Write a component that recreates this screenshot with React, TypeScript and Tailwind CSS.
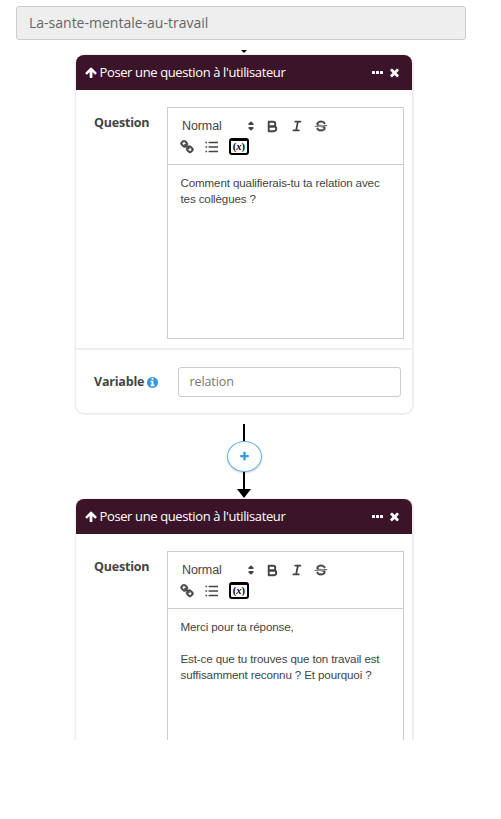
import type { ReactNode } from 'react';

const PATHS = {
  up: 'M1611 971q0 51-37 90l-75 75q-38 38-91 38-54 0-90-38l-294-293v704q0 52-37.5 84.5t-90.5 32.5h-128q-53 0-90.5-32.5t-37.5-84.5v-704l-294 293q-36 38-90 38t-90-38l-75-75q-38-38-38-90 0-53 38-91l651-651q35-37 90-37 54 0 91 37l651 651q37 39 37 91z',
  times:
    'M1490 1322q0 40-28 68l-136 136q-28 28-68 28t-68-28l-294-294-294 294q-28 28-68 28t-68-28l-136-136q-28-28-28-68t28-68l294-294-294-294q-28-28-28-68t28-68l136-136q28-28 68-28t68 28l294 294 294-294q28-28 68-28t68 28l136 136q28 28 28 68t-28 68l-294 294 294 294q28 28 28 68z',
  info: 'M1152 1376v-160q0-14-9-23t-23-9h-96v-512q0-14-9-23t-23-9h-320q-14 0-23 9t-9 23v160q0 14 9 23t23 9h96v320h-96q-14 0-23 9t-9 23v160q0 14 9 23t23 9h448q14 0 23-9t9-23zm-128-896v-160q0-14-9-23t-23-9h-192q-14 0-23 9t-9 23v160q0 14 9 23t23 9h192q14 0 23-9t9-23zm640 416q0 209-103 385.5t-279.5 279.5-385.5 103-385.5-103-279.5-279.5-103-385.5 103-385.5 279.5-279.5 385.5-103 385.5 103 279.5 279.5 103 385.5z',
  plus: 'M1600 736v192q0 40-28 68t-68 28h-416v416q0 40-28 68t-68 28h-192q-40 0-68-28t-28-68v-416h-416q-40 0-68-28t-28-68v-192q0-40 28-68t68-28h416v-416q0-40 28-68t68-28h192q40 0 68 28t28 68v416h416q40 0 68 28t28 68z',
  link: 'M1520 1216q0-40-28-68l-208-208q-28-28-68-28-42 0-72 32 3 3 19 18.5t21.5 21.5 15 19 13 25.5 3.5 27.5q0 40-28 68t-68 28q-15 0-27.5-3.5t-25.5-13-19-15-21.5-21.5-18.5-19q-33 31-33 73 0 40 28 68l206 207q27 27 68 27 40 0 68-26l147-146q28-28 28-67zm-703-705q0-40-28-68l-206-207q-28-28-68-28-39 0-68 27l-147 146q-28 28-28 67 0 40 28 68l208 208q27 27 68 27 42 0 72-31-3-3-19-18.5t-21.5-21.5-15-19-13-25.5-3.5-27.5q0-40 28-68t68-28q15 0 27.5 3.5t25.5 13 19 15 21.5 21.5 18.5 19q33-31 33-73zm895 705q0 120-85 203l-147 146q-83 83-203 83-121 0-204-85l-206-207q-83-83-83-203 0-123 88-209l-88-88q-86 88-208 88-120 0-204-84l-208-208q-84-84-84-204t85-203l147-146q83-83 203-83 121 0 204 85l206 207q83 83 83 203 0 123-88 209l88 88q86-88 208-88 120 0 204 84l208 208q84 84 84 204z',
};

function Glyph({ name, className }: { name: keyof typeof PATHS; className: string }) {
  return (
    <svg viewBox="0 0 1792 1792" fill="currentColor" className={`shrink-0 ${className}`}>
      <path d={PATHS[name]} />
    </svg>
  );
}

function ToolIcon({ children, className = '' }: { children: ReactNode; className?: string }) {
  return (
    <svg
      viewBox="0 0 18 18"
      fill="none"
      stroke="#444"
      strokeWidth="2"
      strokeLinecap="round"
      strokeLinejoin="round"
      className={`size-4 shrink-0 ${className}`}
    >
      {children}
    </svg>
  );
}

function Toolbar() {
  return (
    <div className="h-[57px] border-b border-[#ccc] pt-[9px] text-[#444]">
      <div className="flex h-[18px] items-center pl-[14px]">
        <span className="w-[61px] text-[12.5px] tracking-[-0.1px]">Normal</span>
        <ToolIcon>
          <polygon fill="#444" points="7 11 9 13 11 11" />
          <polygon fill="#444" points="7 7 9 5 11 7" />
        </ToolIcon>
        <ToolIcon className="ml-[5px] h-[17px] w-[17px]">
          <path d="M5,4H9.5A2.5,2.5,0,0,1,9.5,9H5Z" />
          <path d="M5,9h5.5A2.5,2.5,0,0,1,10.5,14H5Z" />
        </ToolIcon>
        <ToolIcon className="ml-[7.5px]">
          <path d="M7 4h6M5 14h6M8 14 10 4" />
        </ToolIcon>
        <ToolIcon className="ml-[8.5px]">
          <path strokeWidth="1" d="M15.5 8.5 2.5 9.5" />
          <path
            fill="#444"
            stroke="#444"
            strokeWidth="0.3"
            d="M9.007,8C6.542,7.791,6,7.519,6,6.5,6,5.792,7.283,5,9,5c1.571,0,2.765.679,2.969,1.309a1,1,0,0,0,1.9-.617C13.356,4.106,11.354,3,9,3,6.2,3,4,4.538,4,6.5a3.2,3.2,0,0,0,.5,1.843Z"
          />
          <path
            fill="#444"
            stroke="#444"
            strokeWidth="0.3"
            d="M8.984,10C11.457,10.208,12,10.479,12,11.5c0,0.708-1.283,1.5-3,1.5-1.571,0-2.765-.679-2.969-1.309a1,1,0,1,0-1.9.617C4.644,13.894,6.646,15,9,15c2.8,0,5-1.538,5-3.5a3.2,3.2,0,0,0-.5-1.843Z"
          />
        </ToolIcon>
      </div>
      <div className="mt-[2px] flex h-[19px] items-center pl-[12px]">
        <Glyph name="link" className="size-[14px] stroke-[#444] stroke-[90]" />
        <svg viewBox="0 0 13 12" className="ml-[10.5px] h-3 w-[13px] shrink-0" stroke="#444" strokeWidth="1.6">
          <path d="M0.5 1.5h1.6M0.5 6h1.6M0.5 10.5h1.6M3.6 1.5H13M3.6 6H13M3.6 10.5H13" />
        </svg>
        <span className="ml-[11px] flex h-[17px] w-[20.5px] items-center justify-center rounded-[3px] border-2 border-t-[3.5px] border-black font-['Liberation_Serif',serif] text-[10.5px] leading-none font-bold text-black">
          (<i>x</i>)
        </span>
      </div>
    </div>
  );
}

function Card({ children, footer }: { children: ReactNode; footer?: ReactNode }) {
  return (
    <section className="w-[339px] rounded-[10px] border-2 border-t border-l border-[#eee] bg-white shadow-[-1px_0_0_#f7f7f7]">
      <header className="flex h-[35px] items-center rounded-t-[8px] bg-[#3c1429] pr-[11px] pl-[8.5px] text-white">
        <Glyph name="up" className="size-[13px]" />
        <h2 className="ml-[2px] text-[13px] tracking-[-0.38px] whitespace-nowrap">Poser une question à l'utilisateur</h2>
        <span className="ml-auto flex h-[3px] w-[11px] gap-[0.5px]">
          <i className="flex-1 rounded-[0.5px] bg-white" />
          <i className="flex-1 rounded-[0.5px] bg-white" />
          <i className="flex-1 rounded-[0.5px] bg-white" />
        </span>
        <Glyph name="times" className="ml-[5px] size-[13px]" />
      </header>
      <div className="flex h-[258px] pt-[17px] pl-[18px]">
        <div className="w-[73px] pt-[7px] text-[12.5px] leading-[18px] font-bold tracking-[-0.2px] text-[#444]">
          Question
        </div>
        <div className="h-[232px] w-[237px] border border-[#ccc] font-['Liberation_Sans',Arial,sans-serif]">
          <Toolbar />
          <div className="pt-[10px] pl-[12.5px] text-[11.6px] leading-4 tracking-[-0.13px] whitespace-nowrap text-[#444]">
            {children}
          </div>
        </div>
      </div>
      {footer}
    </section>
  );
}

export default function App() {
  return (
    <main className="h-[819px] w-[501px] overflow-hidden bg-white font-['Open_Sans',sans-serif]">
      <div className="pt-[6px] pl-4">
        <div className="flex h-[34px] w-[450px] items-center rounded-[3px] border border-[#ccc] bg-[#eee] pb-[2px] pl-3 text-[14px] text-[#666]">
          La-sante-mentale-au-travail
        </div>
      </div>
      <div className="mt-[10px] h-[690px] overflow-hidden pl-[75px]">
        <svg viewBox="0 0 6 4" className="ml-[166px] block h-1 w-[6px]">
          <path d="M0 0h6L3 3z" />
        </svg>
        <Card
          footer={
            <div className="flex h-[65px] items-center border-t-2 border-[#eee] pl-[18px] text-[12.5px]">
              <label className="flex w-[84px] items-center pt-[2px] font-bold tracking-[-0.2px] text-[#444]">
                Variable
                <Glyph name="info" className="ml-[2px] size-[13px] text-[#3498db]" />
              </label>
              <div className="flex h-[30px] w-[223px] items-center rounded-[3px] border border-[#ccc] pt-px pl-[10.5px] tracking-[-0.1px] text-[#777]">
                relation
              </div>
            </div>
          }
        >
          Comment qualifierais-tu ta relation avec
          <br />
          tes collègues ?
        </Card>
        <div className="flex w-[338px] flex-col items-center pt-[9px]">
          <div className="h-[17px] w-[2px] bg-black" />
          <div className="ml-px flex h-[31px] w-[35px] items-center justify-center rounded-[50%] border border-[#5dade2] text-[#3498db] shadow-[0_1px_2px_#0003]">
            <Glyph name="plus" className="size-[11px]" />
          </div>
          <div className="h-[17px] w-[2px] bg-black" />
          <svg viewBox="0 0 14 9" className="block h-[9px] w-[14px]">
            <path d="M0 0h14L7 9z" />
          </svg>
        </div>
        <Card>
          Merci pour ta réponse,
          <br />
          <br />
          Est-ce que tu trouves que ton travail est
          <br />
          suffisamment reconnu ? Et pourquoi ?
        </Card>
      </div>
    </main>
  );
}
